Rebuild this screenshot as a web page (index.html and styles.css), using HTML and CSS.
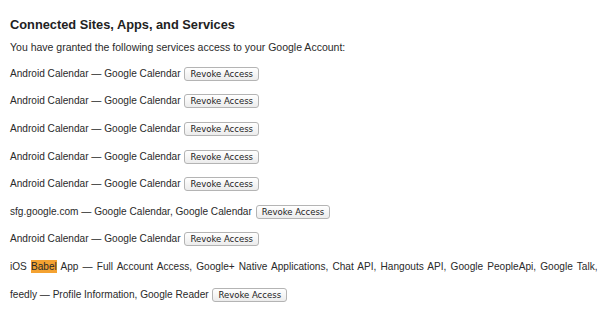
FILE: index.html
```html
<!DOCTYPE html>
<html lang="en">
	<head>
		<meta charset="UTF-8" />
		<meta name="viewport" content="width=device-width, initial-scale=1.0" />
		<title>Connected Sites, Apps, and Services</title>
		<link rel="stylesheet" href="styles.css">
	</head>
	<body>
		<div class="page">
			<h2 class="title">Connected Sites, Apps, and Services</h2>
			<p class="intro">You have granted the following services access to your Google Account:</p>
			<div class="row">Android Calendar — Google Calendar <button class="revoke">Revoke Access</button></div>
			<div class="row">Android Calendar — Google Calendar <button class="revoke">Revoke Access</button></div>
			<div class="row">Android Calendar — Google Calendar <button class="revoke">Revoke Access</button></div>
			<div class="row">Android Calendar — Google Calendar <button class="revoke">Revoke Access</button></div>
			<div class="row">Android Calendar — Google Calendar <button class="revoke">Revoke Access</button></div>
			<div class="row">sfg.google.com — Google Calendar, Google Calendar <button class="revoke">Revoke Access</button></div>
			<div class="row">Android Calendar — Google Calendar <button class="revoke">Revoke Access</button></div>
			<div class="row wide">iOS <span class="match">Babel</span> App — Full Account Access, Google+ Native Applications, Chat API, Hangouts API, Google PeopleApi, Google Talk, Google Reader <button class="revoke">Revoke Access</button></div>
			<div class="row">feedly — Profile Information, Google Reader <button class="revoke">Revoke Access</button></div>
			<div class="row">Flipboard — Profile Information, Google Reader, Google Contacts, Gmail <button class="revoke">Revoke Access</button></div>
		</div>
	</body>
</html>
```

FILE: styles.css
```css
* {
	box-sizing: border-box;
}
body {
	margin: 0;
	overflow: hidden;
	background: #fff;
	font-family: "Liberation Sans", Arial, sans-serif;
	color: #2a2a2a;
}
.page {
	padding: 16px 0 0 10px;
	white-space: nowrap;
}
.title {
	margin: 0;
	font-size: 12.8px;
	line-height: 18px;
	color: #222;
}
.intro {
	margin: 0;
	padding: 6px 0 6px;
	font-size: 10.5px;
	line-height: 14px;
}
.row {
	font-size: 10.1px;
	line-height: 14px;
	padding: 6.8px 0;
}
.wide {
	word-spacing: 1.35px;
}
.match {
	background: #f4a231;
	padding: 1px 0;
}
.revoke {
	height: 14px;
	margin-left: 1px;
	padding: 0 5px;
	font-family: "DejaVu Sans", sans-serif;
	font-size: 8.5px;
	line-height: 12px;
	color: #222;
	border: 1px solid #b4b4b4;
	border-radius: 3px;
	background: linear-gradient(#ffffff, #ececec);
	vertical-align: top;
	word-spacing: normal;
}
```
